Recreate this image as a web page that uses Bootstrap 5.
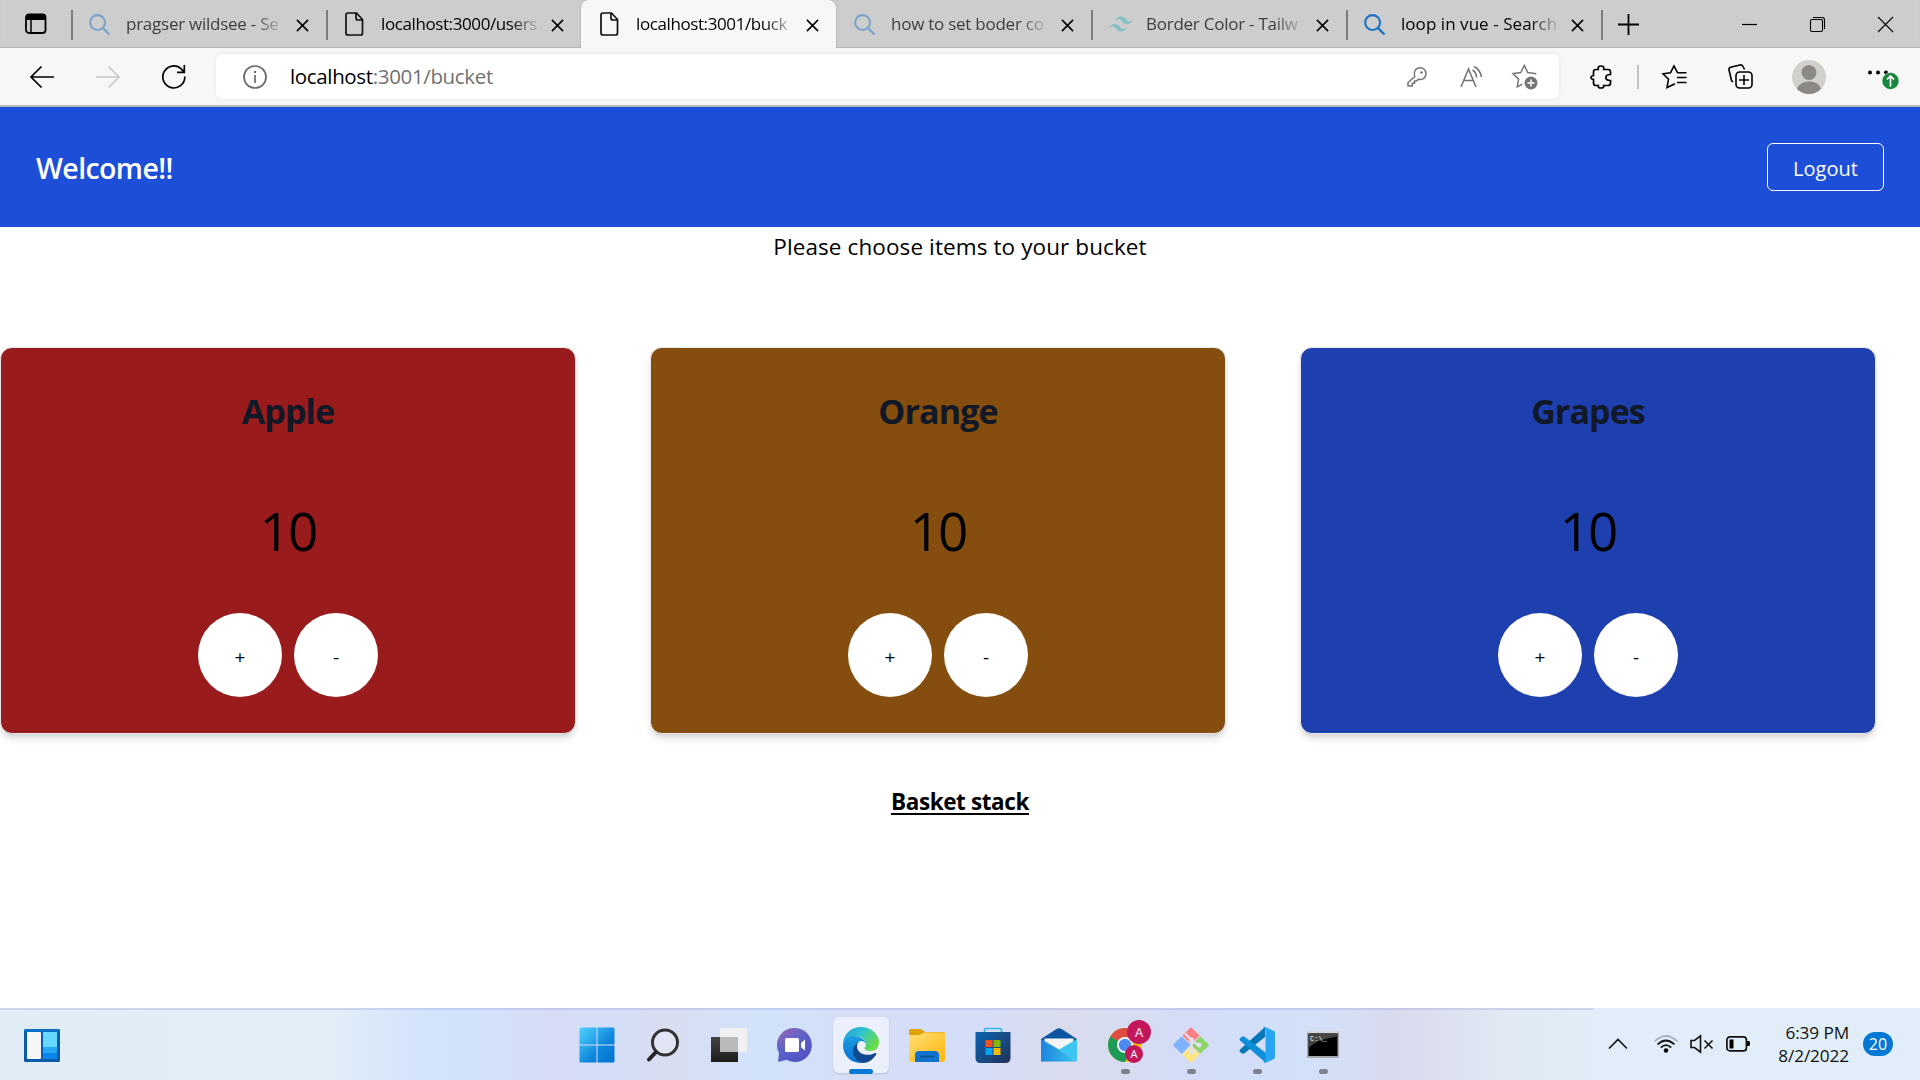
<!DOCTYPE html>
<html lang="en">
<head>
<meta charset="utf-8">
<meta name="viewport" content="width=device-width, initial-scale=1">
<title>Bucket</title>
<link href="https://cdn.jsdelivr.net/npm/bootstrap@5.3.0/dist/css/bootstrap.min.css" rel="stylesheet">
<style>
  body { font-family: "Open Sans", "Noto Sans", sans-serif; height: 1080px; overflow: hidden; color: #000; background: #fff; }
  svg { display: block; flex: none; overflow: visible; }
  .tabstrip { height: 48px; background: #cdcdcd; box-shadow: inset 0 -1px 1px #b4b4b4; }
  .tab-actions { width: 71px; padding-left: 24px; }
  .tab-item { width: 255px; height: 48px; position: relative; padding-left: 18px; font-size: 17px; color: #000; }
  .tab-item .fav { width: 22px; margin-right: 15px; }
  .tab-item .tab-title { width: 170px; margin-right: -12px; white-space: nowrap; letter-spacing: -.25px; line-height: 24px;
    -webkit-mask-image: linear-gradient(90deg, #000 128px, transparent 160px); mask-image: linear-gradient(90deg, #000 128px, transparent 160px); }
  .tab-item .tab-title.tight { letter-spacing: -.4px; }
  .tab-item .tab-title.loose { letter-spacing: .05px; }
  .tab-item .tab-close { margin-left: 12px; margin-top: 2px; }
  .tab-item.ruled::before { content: ""; width: 2px; height: 30px; background: #7c7c7c; position: absolute; left: 0; top: 10px; }
  .tab-item.sleeping .tab-title { color: #3f3f3f; }
  .tab-item.sleeping .fav { opacity: .45; }
  .tab-item.current { background: #f7f7f7; border-radius: 8px 8px 0 0; box-shadow: 0 0 2px #999; clip-path: inset(0 -3px 0 -3px); }
  .window-tools { gap: 53px; padding-right: 27px; }
  .toolbar { height: 59px; background: #f7f7f7; border-bottom: 2px solid #bbb; }
  .nav-tools { width: 216px; padding-left: 30px; gap: 42px; }
  .omnibox { width: 1343px; height: 45px; background: #fff; border-radius: 6px; box-shadow: 0 0 4px #e4e4e4; font-size: 20.5px; padding: 0 21px 0 27px; }
  .url-text { margin-left: 23px; letter-spacing: -.35px; }
  .url-text span { color: #717171; }
  .app-header { height: 120px; background: #1d4ed8; padding: 0 36px; }
  .brand-text { font-size: 28.5px; font-weight: 600; letter-spacing: -.6px; padding-top: 2px; }
  .btn-logout { width: 117px; height: 48px; border: 1px solid #fff; border-radius: 6px; font-size: 20px; padding: 3px 0 0; color: #fff; }
  .prompt-line { font-size: 22.5px; height: 40px; line-height: 40px; letter-spacing: .1px; }
  .fruit-grid { display: grid; grid-template-columns: repeat(3, 1fr); column-gap: 30px; padding-top: 80px; }
  .fruit-card { width: 576px; height: 387px; border: 1px solid #e5e7eb; border-radius: 12px; box-shadow: 0 6px 9px -2px rgba(0,0,0,.14), 0 3px 6px -3px rgba(0,0,0,.12); padding-top: 36px; }
  .fruit-name { font-size: 34px; line-height: 54px; font-weight: 700; color: #111827; letter-spacing: -.9px; }
  .fruit-count { font-size: 53px; line-height: 60px; margin-top: 63px; letter-spacing: -2px; }
  .btn-row { gap: 12px; margin-top: 52px; }
  .btn-round { width: 84px; height: 84px; border-radius: 50%; background: #fff; font-size: 19px; color: #000; padding: 5px 0 0; border: 0; }
  .bg-apple { background: #991b1b; } .bg-orange { background: #854d0e; } .bg-grapes { background: #1e40af; }
  .stack-title { font-size: 22.5px; font-weight: 700; letter-spacing: -.4px; margin-top: 50px; line-height: 36px; text-decoration: underline; text-decoration-thickness: 2px; text-underline-offset: 3px; }
  .taskbar { height: 72px; background: linear-gradient(90deg, #e0ecf6 0, #e2edf8 330px, #d3e3fb 420px, #d3e2fb 480px, #d6dbf6 550px, #d4def7 610px, #d9ddf1 670px, #d1e3fb 760px, #d5def6 850px, #d5def8 970px, #d9dcee 1070px, #d3ddf8 1210px, #d2e0f8 1310px, #d9daee 1400px, #e0e9f4 1510px, #e1edf8 1600px); }
  .taskbar::before { content: ""; position: absolute; left: 0; top: 0; width: 1594px; height: 2px; background: rgba(110,120,170,.18); }
  .widget-area { width: 564px; padding: 21px 0 0 24px; }
  .slot { width: 66px; height: 72px; position: relative; padding-top: 19px; }
  .slot.running::after { content: ""; position: absolute; left: 29px; top: 61px; width: 9px; height: 5px; border-radius: 3px; background: #7b818d; }
  .slot.focused::before { content: ""; position: absolute; left: 5px; top: 9px; width: 56px; height: 56px; border-radius: 6px; background: #ebf0fc; box-shadow: 0 1px 2px #b9c2da; }
  .slot.focused::after { content: ""; position: absolute; left: 21px; top: 61px; width: 24px; height: 5px; border-radius: 3px; background: #0078d4; }
  .slot svg { position: relative; }
  .clock { font-size: 17.2px; line-height: 23px; color: #111; letter-spacing: -.1px; width: 90px; }
  .notice-pill { width: 30px; height: 24px; border-radius: 12px; background: #0078d4; font-size: 16px; line-height: 24px; }
</style>
</head>
<body class="d-flex flex-column m-0">
<svg width="0" height="0" class="position-absolute">
  <defs>
    <symbol id="i-search" viewBox="0 0 22 22"><circle cx="9" cy="9" r="7.8" fill="none" stroke="#1a73c8" stroke-width="2.2"/><path d="M14.500 14.500l7 7" stroke="#1a73c8" stroke-width="2.400"/></symbol>
    <symbol id="i-file" viewBox="0 0 22 26"><path d="M4 2h8.5l6 6.500V22q0 2-2 2H4q-2 0-2-2V4q0-2 2-2zM12 2v5q0 2 2 2h4.500" fill="none" stroke="#111" stroke-width="1.7"/></symbol>
    <symbol id="i-close" viewBox="0 0 14 14"><path d="M1 1l12 12M13 1L1 13" stroke="#000" stroke-width="1.7"/></symbol>
    <linearGradient id="gwin" x1="0" y1="0" x2="1" y2="1"><stop offset="0" stop-color="#4fd4ff"/><stop offset=".6" stop-color="#0f86dc"/><stop offset="1" stop-color="#0072d0"/></linearGradient>
    <linearGradient id="gdark" x1="0" y1="0" x2="0" y2="1"><stop offset="0" stop-color="#444"/><stop offset="1" stop-color="#1c1c1c"/></linearGradient>
    <linearGradient id="gchat" x1="0" y1="0" x2=".7" y2="1"><stop offset="0" stop-color="#9a68b0"/><stop offset=".5" stop-color="#5f62c8"/><stop offset="1" stop-color="#5052c4"/></linearGradient>
    <linearGradient id="gedge" x1="0" y1="0" x2="1" y2=".5"><stop offset="0" stop-color="#2398dc"/><stop offset=".5" stop-color="#2ec3cf"/><stop offset="1" stop-color="#68dc48"/></linearGradient>
    <linearGradient id="gedge2" x1="0" y1="0" x2="0" y2="1"><stop offset="0" stop-color="#1b9de2"/><stop offset="1" stop-color="#0a6fd0"/></linearGradient>
    <linearGradient id="gfold" x1="0" y1="0" x2="1" y2="1"><stop offset="0" stop-color="#ffdf76"/><stop offset="1" stop-color="#fdb50c"/></linearGradient>
    <linearGradient id="gstore" x1="0" y1="0" x2="1" y2="1"><stop offset="0" stop-color="#0b65b4"/><stop offset="1" stop-color="#223358"/></linearGradient>
    <linearGradient id="gmail" x1="0" y1="0" x2="1" y2="0"><stop offset="0" stop-color="#1d84dc"/><stop offset="1" stop-color="#3bc6f2"/></linearGradient>
  </defs>
</svg>

<div class="tabstrip d-flex align-items-center flex-shrink-0">
  <div class="tab-actions"><svg width="24" height="24" viewBox="0 0 24 24"><rect x="2" y="2.500" width="19.500" height="18.500" rx="3" fill="none" stroke="#000" stroke-width="1.800"/><path d="M2 8V4q0-2 2-2h15.500q2 0 2 2v4z"/><path d="M7 8v13" stroke="#000" stroke-width="1.500"/></svg></div>
  <div class="tab-item ruled sleeping d-flex align-items-center"><div class="fav"><svg width="21" height="21"><use href="#i-search"/></svg></div><div class="tab-title">pragser wildsee - Se</div><svg class="tab-close" width="13" height="13"><use href="#i-close"/></svg></div>
  <div class="tab-item ruled d-flex align-items-center"><div class="fav"><svg width="22" height="26"><use href="#i-file"/></svg></div><div class="tab-title tight">localhost:3000/users</div><svg class="tab-close" width="13" height="13"><use href="#i-close"/></svg></div>
  <div class="tab-item current d-flex align-items-center"><div class="fav"><svg width="22" height="26"><use href="#i-file"/></svg></div><div class="tab-title tight">localhost:3001/buck</div><svg class="tab-close" width="13" height="13"><use href="#i-close"/></svg></div>
  <div class="tab-item sleeping d-flex align-items-center"><div class="fav"><svg width="21" height="21"><use href="#i-search"/></svg></div><div class="tab-title">how to set boder co</div><svg class="tab-close" width="13" height="13"><use href="#i-close"/></svg></div>
  <div class="tab-item ruled sleeping d-flex align-items-center"><div class="fav"><svg width="24" height="16" viewBox="0 0 24 15"><path d="M6 5Q7.500 0 12 0c5 0 5 5 8.500 5Q22.500 5 24 2.500 22.500 7.500 18 7.500c-5 0-5-5-8.500-5Q7.500 2.500 6 5zM0 12.500Q1.500 7.500 6 7.500c5 0 5 5 8.500 5q2 0 3.500-2.500-1.500 5-6 5c-5 0-5-5-8.500-5Q1.500 10 0 12.500z" fill="#2fb3b8"/></svg></div><div class="tab-title">Border Color - Tailw</div><svg class="tab-close" width="13" height="13"><use href="#i-close"/></svg></div>
  <div class="tab-item ruled d-flex align-items-center"><div class="fav"><svg width="21" height="21"><use href="#i-search"/></svg></div><div class="tab-title loose">loop in vue - Search</div><svg class="tab-close" width="13" height="13"><use href="#i-close"/></svg></div>
  <div class="tab-item ruled flex-fill d-flex align-items-center justify-content-between" style="padding-left:17px">
    <svg width="21" height="21" viewBox="0 0 21 21"><path d="M10.500 0v21M0 10.500h21" stroke="#000" stroke-width="1.800"/></svg>
    <div class="window-tools d-flex align-items-center">
      <svg width="15" height="15"><path d="M0 7.500h15" stroke="#000" stroke-width="1.200"/></svg>
      <svg width="15" height="15" viewBox="0 0 15 15"><g fill="none" stroke="#000" stroke-width="1.100"><rect x=".5" y="2.500" width="12" height="12" rx="1.500"/><path d="M3 .5h9q2.500 0 2.500 2.500v9"/></g></svg>
      <svg width="15" height="15"><path d="M0 0l15 15M15 0L0 15" stroke="#000" stroke-width="1.100"/></svg>
    </div>
  </div>
</div>

<div class="toolbar d-flex align-items-center flex-shrink-0">
  <div class="nav-tools d-flex align-items-center">
    <svg width="24" height="22" viewBox="0 0 24 22"><path d="M24 11H1M11.500 .5L1 11l10.500 10.500" fill="none" stroke="#000" stroke-width="1.700"/></svg>
    <svg width="24" height="22" viewBox="0 0 24 22"><path d="M0 11h23M12.500 .5L23 11 12.500 21.500" fill="none" stroke="#c9c9c9" stroke-width="1.700"/></svg>
    <svg width="24" height="24" viewBox="0 0 24 24"><path d="M22.800 11.500A11 11 0 1 1 19.500 4.100L22 7M22.300 0v7.300H15" fill="none" stroke="#000" stroke-width="1.700"/></svg>
  </div>
  <div class="omnibox d-flex align-items-center">
    <svg width="24" height="24" viewBox="0 0 24 24"><circle cx="12" cy="12" r="11" fill="none" stroke="#6b6b6b" stroke-width="1.700"/><path d="M12 10v8" stroke="#6b6b6b" stroke-width="1.700"/><circle cx="12" cy="7" r="1.200" fill="#6b6b6b"/></svg>
    <div class="flex-fill url-text">localhost<span>:3001/bucket</span></div>
    <svg width="20" height="20" viewBox="0 0 20 20"><path d="M7.700 9.700Q6 2.500 11.500 1c5-1.200 8 3 7.400 6.500-.8 4.500-4.500 5.700-7.400 4.700L9.500 14H7.500v2.300H5.300V19H1v-3.500z" fill="none" stroke="#757575" stroke-width="1.500"/><circle cx="14.500" cy="5.500" r="1.300" fill="#757575"/></svg>
    <svg style="margin-left:33px" width="24" height="22" viewBox="0 0 24 22"><path d="M1 21L8.500 3 16 21M3.700 14.500h9.600M12.500 4q4 2.500 4 7.500M14 .5q6.500 3.500 7.500 10.500" fill="none" stroke="#757575" stroke-width="1.600"/></svg>
    <svg style="margin-left:28px" width="26" height="26" viewBox="0 0 26 26"><path d="M23 10.500l.5-1-7.700-1L12.300 1.500 8.800 8.500 1 9.600l5.600 5.500-1.300 7.700 5-2.600" fill="none" stroke="#757575" stroke-width="1.500"/><circle cx="19" cy="19" r="6.500" fill="#757575"/><path d="M19 15.500v7M15.500 19h7" stroke="#fff" stroke-width="1.500"/></svg>
  </div>
  <div class="d-flex align-items-center flex-fill" style="padding-left:31px">
    <svg width="22" height="24" viewBox="0 0 22 24"><path d="M6 4.500h2.300Q7.500 1 11 1t2.700 3.500H18q2.500 0 2.500 2.500v2.500q-4.700 0-4.700 3t4.700 3V18q0 2.500-2.500 2.500h-4.300Q14.500 23 11 23t-2.700-2.500H6Q3.500 20.500 3.500 18v-3.500Q1 14 1 12.500t2.500-2V7Q3.500 4.500 6 4.500z" fill="none" stroke="#000" stroke-width="1.700"/></svg>
    <div style="width:2px;height:24px;background:#c2c2c2;margin-left:25px"></div>
    <svg style="margin-left:23px" width="25" height="24" viewBox="0 0 25 24"><path d="M15.500 7.700L12 1 8.500 7.700 1 8.800l5.500 5.500L5 22.500l8-3.800M15 12.500h9.500M15 17.500h9.500M15.200 7.700h9.300" fill="none" stroke="#000" stroke-width="1.600"/></svg>
    <svg style="margin-left:41px" width="25" height="25" viewBox="0 0 25 25"><rect x="8" y="8" width="16" height="16" rx="3.500" fill="none" stroke="#000" stroke-width="1.600"/><path d="M16 11v10M11 16h10M5 18L3.500 16.500 1 6q-.5-2 1.500-2.800L12 1q2-.5 3 1.500L16.500 5.500" fill="none" stroke="#000" stroke-width="1.600"/></svg>
    <svg style="margin-left:39px" width="34" height="34" viewBox="0 0 34 34"><circle cx="17" cy="17" r="17" fill="#d2d0cd"/><circle cx="17" cy="12.500" r="7.500" fill="#8c8886"/><path d="M5 29Q7.500 21.500 17 21.500T29 29Q24 34 17 34T5 29z" fill="#8c8886"/></svg>
    <svg style="margin-left:42px;margin-top:9px" width="31" height="26" viewBox="0 0 31 26"><circle cx="2" cy="4.500" r="2"/><circle cx="10" cy="4.500" r="2"/><circle cx="18" cy="4.500" r="2"/><circle cx="22.500" cy="13" r="8.500" fill="#18863c" stroke="#f7f7f7" stroke-width=".6"/><path d="M22.500 18.500v-10M19 11.500l3.500-3.500L26 11.500" fill="none" stroke="#fff" stroke-width="1.700"/></svg>
  </div>
</div>

<header class="app-header d-flex align-items-center justify-content-between text-white flex-shrink-0">
  <span class="brand-text">Welcome!!</span>
  <button class="btn btn-logout">Logout</button>
</header>

<main class="flex-fill">
  <div class="prompt-line text-center">Please choose items to your bucket</div>
  <div class="fruit-grid">
    <div class="fruit-card bg-apple text-center"><div class="fruit-name">Apple</div><div class="fruit-count">10</div><div class="btn-row d-flex justify-content-center"><button class="btn-round">+</button><button class="btn-round">-</button></div></div>
    <div class="fruit-card bg-orange text-center"><div class="fruit-name">Orange</div><div class="fruit-count">10</div><div class="btn-row d-flex justify-content-center"><button class="btn-round">+</button><button class="btn-round">-</button></div></div>
    <div class="fruit-card bg-grapes text-center"><div class="fruit-name">Grapes</div><div class="fruit-count">10</div><div class="btn-row d-flex justify-content-center"><button class="btn-round">+</button><button class="btn-round">-</button></div></div>
  </div>
  <div class="stack-title text-center">Basket stack</div>
</main>

<footer class="taskbar position-relative d-flex flex-shrink-0">
  <div class="widget-area">
    <svg width="36" height="33" viewBox="0 0 36 33"><rect width="36" height="33" rx="1.500" fill="#0b5cab"/><rect x=".5" y=".5" width="35" height="2" fill="#0a78d4"/><rect x="3" y="3" width="14" height="27" rx="1" fill="#f6f6f6"/><path fill="#67d9ff" d="M19 3h14v15H19z"/><path fill="#22a7f5" d="M19 18h14v6H19z"/><path fill="#0a86ea" d="M19 24h14v6H19z"/></svg>
  </div>
  <div class="slot d-flex justify-content-center"><svg width="36" height="36" viewBox="0 0 36 36"><path d="M2 .5h15.500v17H.5V2Q.5.500 2 .5zM18.500 .5H34q1.500 0 1.500 1.500v15.500h-17zM.5 18.500h17v17H2q-1.500 0-1.500-1.500zM18.500 18.500h17V34q0 1.500-1.500 1.500H18.500z" fill="url(#gwin)"/></svg></div>
  <div class="slot d-flex justify-content-center"><svg width="36" height="36" viewBox="0 0 36 36"><circle cx="20" cy="15.500" r="12.500" fill="#e8ebf6" fill-opacity=".6" stroke="#333" stroke-width="3"/><path d="M11 25L4 32.500" stroke="#222" stroke-width="4" stroke-linecap="round"/></svg></div>
  <div class="slot d-flex justify-content-center"><svg width="36" height="36" viewBox="0 0 36 36"><path d="M0 10h27v25H0z" fill="url(#gdark)"/><path d="M9 1h27v24H9z" fill="#f1f1f1"/><path d="M9 10h18v15H9z" fill="#b9b9b9"/></svg></div>
  <div class="slot d-flex justify-content-center"><svg width="36" height="36" viewBox="0 0 36 36"><path d="M18 1a17 17 0 1 1-8.500 31.800L1 35l1-9A17 17 0 0 1 18 1z" fill="url(#gchat)"/><rect x="8" y="11" width="14" height="14" rx="1.500" fill="#fff"/><path d="M24 16l4-3.500v11L24 20z" fill="#fff"/></svg></div>
  <div class="slot focused d-flex justify-content-center"><svg width="36" height="36" viewBox="0 0 36 36"><path d="M0 18C0 7 8 0 18 0s18 7 18 15c0 6-4 9-8.500 9-3.500 0-6-1.200-6-2.700 0-1 1.500-1.500 1.500-4.300 0-4-4.500-8-11-8C5 9 1 13 0 18z" fill="url(#gedge)"/><path d="M0 18C1 11.500 6 9 11 9c7 0 12 4.500 12 8.500-1-3-3.500-4-5.500-3.500C14 15 10 19 10.500 24.500 11 31 17 35.500 21 35.700 8.500 37.500 0 29 0 18z" fill="url(#gedge2)"/><path d="M17 14.200C13.500 16 13.500 20 15 23c3 5.500 11 6 16.500 3.200 1.500-.7 2.500.2 1.700 1.300C30 32.500 25 36 20 36 14 34.500 10 30 10 24c0-4.500 3-8.500 7-9.800z" fill="#10498f"/></svg></div>
  <div class="slot d-flex justify-content-center"><svg width="36" height="36" viewBox="0 0 36 36"><path d="M0 8V3.500Q0 2 1.500 2H12l4 3h18.500Q36 5 36 6.500V12H0z" fill="#e0a30c"/><path d="M0 8h11l4-2.500h21V33q0 2-2 2H2q-2 0-2-2z" fill="url(#gfold)"/><path d="M6 35v-7q0-4 4-4h16q4 0 4 4v7z" fill="#0f72cc"/><path d="M11 29.500h14" stroke="#064b8c" stroke-width="1.500"/></svg></div>
  <div class="slot d-flex justify-content-center"><svg width="36" height="36" viewBox="0 0 36 36"><path d="M9.500 6V3q0-1.500 1.500-1.500h14q1.500 0 1.500 1.500v3" fill="none" stroke="#35b8ee" stroke-width="1.700"/><path d="M.5 5h35v26q0 5-5 5h-25q-5 0-5-5z" fill="url(#gstore)"/><path fill="#f25022" d="M10.500 13h7v7h-7z"/><path fill="#7fba00" d="M18.500 13h7v7h-7z"/><path fill="#00a4ef" d="M10.500 21h7v7h-7z"/><path fill="#ffb900" d="M18.500 21h7v7h-7z"/></svg></div>
  <div class="slot d-flex justify-content-center"><svg width="36" height="36" viewBox="0 0 36 36"><path d="M0 12L15.500 2q2.500-1.500 5 0L36 12v6H0z" fill="#0c53a0"/><path d="M3.500 11.500h29V20L18 27 3.500 18z" fill="#f5f5f5"/><path d="M36 12L18 22.500 36 34.500z" fill="#3cc4f2"/><path d="M0 12L18 22.500 36 34.500H0z" fill="url(#gmail)"/></svg></div>
  <div class="slot running d-flex justify-content-center"><svg width="36" height="36" viewBox="0 0 36 36"><circle cx="18" cy="18" r="17" fill="#fbc116"/><path d="M18 18L3.300 9.500A17 17 0 0 1 32.700 9.500z" fill="#dc4d40"/><path d="M18 18L3.300 9.500A17 17 0 0 0 18 35l7-12z" fill="#1c9b58"/><circle cx="18" cy="18" r="8" fill="#fff"/><circle cx="18" cy="18" r="6.200" fill="#4c8bf5"/><circle cx="32" cy="5" r="12" fill="#c2185b"/><circle cx="27" cy="27" r="9" fill="#c2185b"/><g fill="#fff" text-anchor="middle" font-family="Open Sans"><text x="32" y="9.500" font-size="13" fill="#f3c7d8" font-weight="600">A</text><text x="27" y="31" font-size="11">A</text></g></svg></div>
  <div class="slot running d-flex justify-content-center"><svg width="36" height="36" viewBox="0 0 36 36"><path d="M8.800 9.200L17.300 18l-8.500 8.800L.6 19q-1-1 0-2z" fill="#80b3ff"/><path d="M9.500 8.500L17 1q1-1 2 0l7.500 7.500L18 17z" fill="#ff8080"/><path d="M9.500 27.500L18 19l8.500 8.500L19 35q-1 1-2 0z" fill="#ffe680"/><path d="M27.200 9.200L35.400 17q1 1 0 2l-8.200 7.800L18.700 18z" fill="#8cd465"/><path d="M12 6.500l6.500 6.500v12M19 14l6 4" fill="none" stroke="#e0e1ef" stroke-width="2.200"/><g fill="#e0e1ef"><circle cx="18.500" cy="13" r="2.500"/><circle cx="18.500" cy="25" r="2.700"/><circle cx="26" cy="18" r="2.500"/></g></svg></div>
  <div class="slot running d-flex justify-content-center"><svg width="36" height="36" viewBox="0 0 36 36"><path d="M1 22.500L26 0v10L4.500 27 1 25q-1-1 0-2.500z" fill="#0877b9"/><path d="M1 13.500q-1-1.500 0-2.500L4.500 9 27 26v10z" fill="#0f8fd8"/><path d="M26 0l9 4q1 .7 1 2v24q0 1.300-1 2l-9 4q-1 .3-2-.5 2.500.5 2.500-2v-31q0-2.500-2.500-2 1-1 2-.5z" fill="#27a5f2"/></svg></div>
  <div class="slot running d-flex justify-content-center"><svg width="36" height="36" viewBox="0 0 36 36"><rect x="2" y="4" width="32" height="27" rx="1" fill="#a4a8ad"/><rect x="2.500" y="4" width="31" height="2.200" fill="#d4d8dd"/><path d="M3.500 6.500h29V29h-29z"/><path d="M3.500 6.500h29v3Q12 12 3.500 21z" fill="#454545"/><text x="5" y="14" font-family="Liberation Mono" font-size="7" fill="#fff">C:\_</text></svg></div>
  <div class="d-flex align-items-center flex-fill justify-content-end" style="padding-right:27px">
    <svg width="18" height="10" viewBox="0 0 18 10"><path d="M0 9.500l9-9 9 9" fill="none" stroke="#111" stroke-width="1.600"/></svg>
    <svg style="margin-left:27px" width="24" height="18" viewBox="0 0 24 18"><g fill="none" stroke="#111" stroke-width="1.700"><path d="M.5 6.500q11.500-11 23 0" stroke="#a9b3bd"/><path d="M3.500 9.500q8.500-8 17 0M6.800 12.700q5.200-5 10.400 0"/></g><circle cx="12" cy="15.500" r="2.200"/></svg>
    <svg style="margin-left:12px" width="24" height="18" viewBox="0 0 24 18"><path d="M1 5.500h3.500L10.500 .8v16.400L4.500 12.500H1zM14.500 5.500l8 8M22.500 5.500l-8 8" fill="none" stroke="#111" stroke-width="1.600"/></svg>
    <svg style="margin-left:12px" width="24" height="16" viewBox="0 0 24 16"><rect x=".9" y=".9" width="19.500" height="14" rx="3" fill="none" stroke="#111" stroke-width="1.700"/><path d="M3.500 3.500h4v9h-4zM21 5h1.500q1.500 0 1.500 1.500v2q0 1.500-1.500 1.500H21z"/></svg>
    <div class="clock text-end" style="margin-left:9px"><div>6:39 PM</div><div>8/2/2022</div></div>
    <div class="notice-pill text-white text-center" style="margin-left:14px">20</div>
  </div>
</footer>
<script src="https://cdn.jsdelivr.net/npm/bootstrap@5.3.0/dist/js/bootstrap.bundle.min.js"></script>
</body>
</html>
